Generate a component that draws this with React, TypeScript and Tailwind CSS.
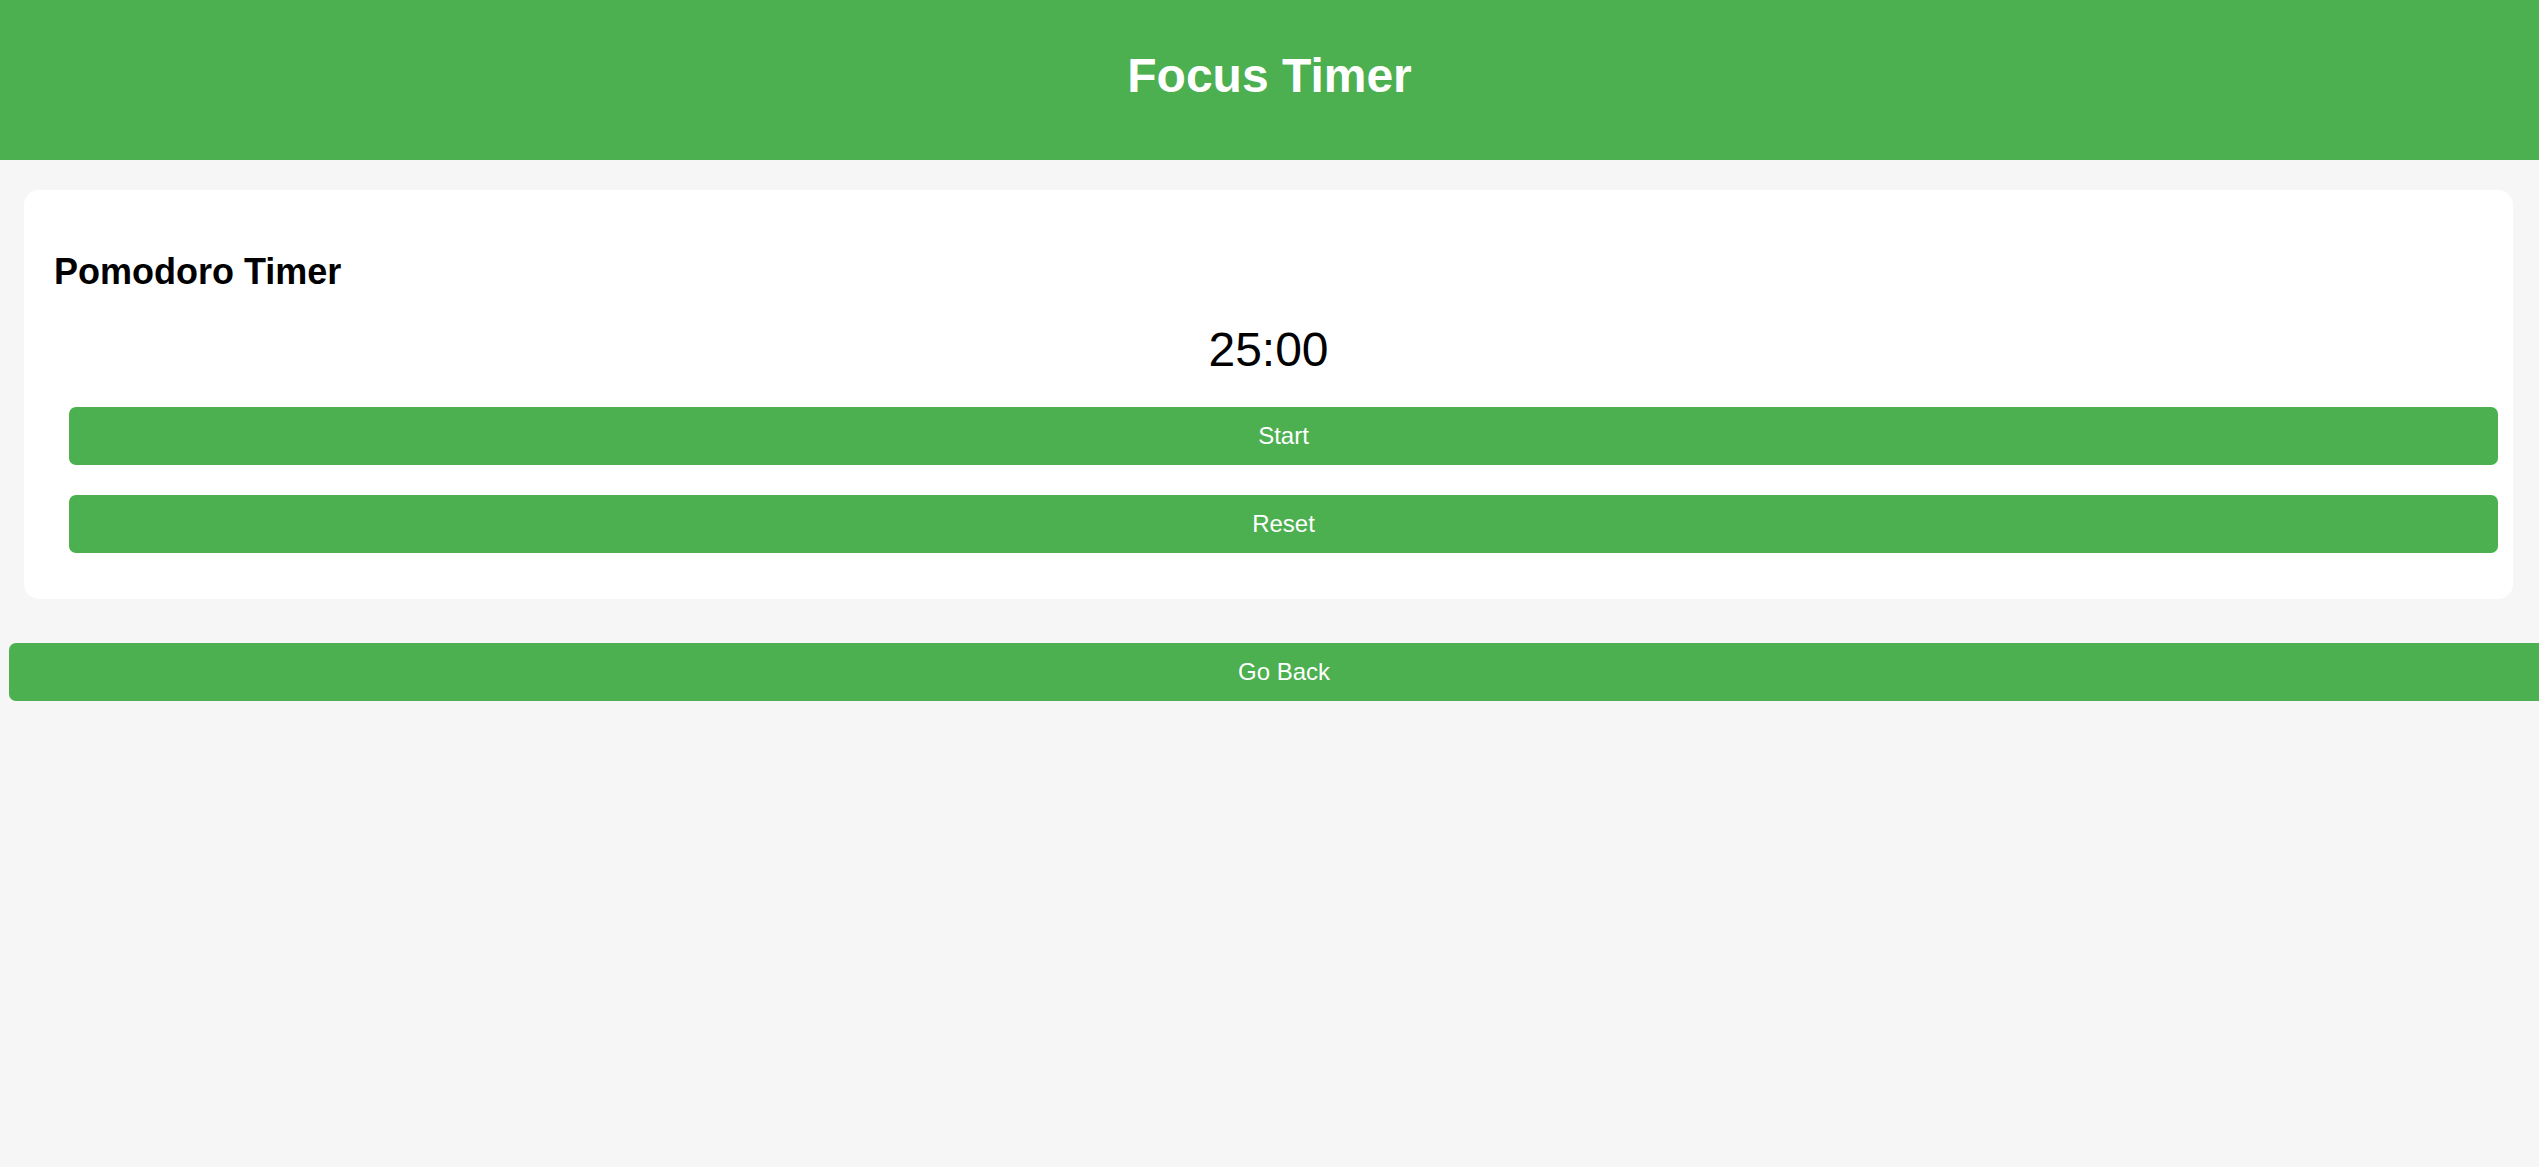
import { useEffect, useState } from "react";

const formatTime = (secs: number) => {
  const m = Math.floor(secs / 60).toString().padStart(2, "0");
  const s = (secs % 60).toString().padStart(2, "0");
  return `${m}:${s}`;
};

const App = () => {
  const [seconds, setSeconds] = useState(25 * 60);
  const [running, setRunning] = useState(false);

  useEffect(() => {
    if (!running) return;
    const id = setInterval(() => {
      setSeconds((s) => (s > 0 ? s - 1 : 0));
    }, 1000);
    return () => clearInterval(id);
  }, [running]);

  const reset = () => {
    setRunning(false);
    setSeconds(25 * 60);
  };

  return (
    <div className="min-h-screen bg-[#f6f6f6] font-['Liberation_Sans',Arial,sans-serif] overflow-x-hidden">
      <header className="h-[160px] bg-[#4CAF50] pt-[48px]">
        <h1 className="text-center text-[48px] leading-[55px] font-bold text-white">
          Focus Timer
        </h1>
      </header>

      <main className="pt-[30px]">
        <section className="ml-[24px] mr-[26px] rounded-[15px] bg-white pt-[61px] pb-[46px]">
          <h2 className="pl-[30px] text-[36px] leading-[41px] font-bold text-black">
            Pomodoro Timer
          </h2>
          <div className="mt-[30px] text-center text-[48px] leading-[55px] text-black">
            {formatTime(seconds)}
          </div>
          <div className="mt-[30px] flex flex-col gap-[30px] pl-[45px] pr-[15px]">
            <button
              onClick={() => setRunning((r) => !r)}
              className="flex h-[58px] w-full items-center justify-center rounded-[7px] bg-[#4CAF50] text-[24px] text-white"
            >
              {running ? "Pause" : "Start"}
            </button>
            <button
              onClick={reset}
              className="flex h-[58px] w-full items-center justify-center rounded-[7px] bg-[#4CAF50] text-[24px] text-white"
            >
              Reset
            </button>
          </div>
        </section>

        <div className="mt-[44px] overflow-hidden">
          <button className="ml-[9px] flex h-[58px] w-[calc(100%+11px)] items-center justify-center rounded-[7px] bg-[#4CAF50] text-[24px] text-white">
            Go Back
          </button>
        </div>
      </main>
    </div>
  );
};

export default App;
